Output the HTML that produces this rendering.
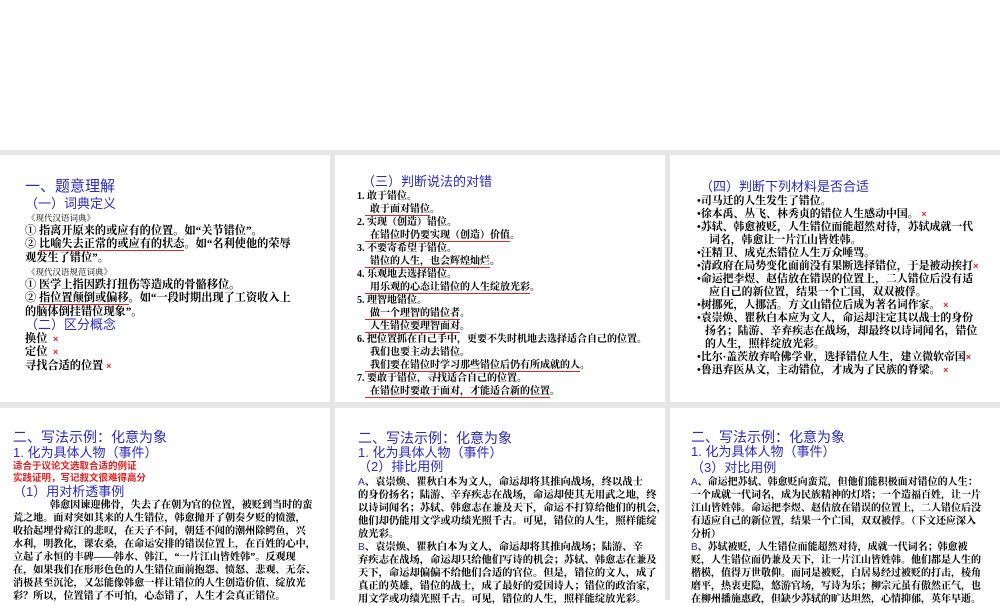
<!DOCTYPE html>
<html><head><meta charset="utf-8"><style>
*{margin:0;padding:0;box-sizing:border-box}
body{width:1000px;height:600px;overflow:hidden;background:#fff;position:relative;font-family:"Liberation Serif","Noto Serif CJK SC",serif}
.bg{position:absolute;left:0;top:150px;width:1000px;height:450px;background:#e6e6e6}
.s{position:absolute;background:#fff;overflow:hidden}
.l{position:absolute;white-space:nowrap;color:#000;font-weight:bold;line-height:13px}
.h{font-family:"Liberation Sans","Noto Sans CJK SC",sans-serif;color:#2a2ac0;font-weight:normal}
.r{color:#e02020;font-family:"Liberation Sans","Noto Sans CJK SC",sans-serif;font-weight:bold}
.u{border-bottom:1.5px solid #d42a2a}
.x{color:#e02020;font-family:"Liberation Sans",sans-serif;font-size:9px;font-weight:bold}
</style></head><body>
<div class="bg"></div>
<div class="s" style="left:0;top:155px;width:330px;height:247px"></div>
<div class="s" style="left:335px;top:155px;width:330px;height:247px"></div>
<div class="s" style="left:670px;top:155px;width:330px;height:247px"></div>
<div class="s" style="left:0;top:408px;width:330px;height:192px"></div>
<div class="s" style="left:335px;top:408px;width:330px;height:192px"></div>
<div class="s" style="left:670px;top:408px;width:330px;height:192px"></div>

<!-- Slide 1 -->
<div style="font-size:11.2px">
<div class="l h" style="left:25px;top:178px;font-size:15px;line-height:18px">一、题意理解</div>
<div class="l h" style="left:25px;top:196px;font-size:13px;line-height:16px">（一）词典定义</div>
<div class="l" style="left:27px;top:212px;font-size:8.5px;font-weight:normal">《现代汉语词典》</div>
<div class="l" style="left:25px;top:225px">① 指离开原来的或应有的位置。如“关节错位”。</div>
<div class="l" style="left:25px;top:238px">② <span class="u">比喻失去正常的或应有的状态</span>。如“名利使他的荣辱</div>
<div class="l" style="left:25px;top:252px">观发生了错位”。</div>
<div class="l" style="left:27px;top:266px;font-size:8.5px;font-weight:normal">《现代汉语规范词典》</div>
<div class="l" style="left:25px;top:279px">① 医学上指因跌打扭伤等造成的骨骼移位。</div>
<div class="l" style="left:25px;top:292px">② <span class="u">指位置颠倒或偏移</span>。如“一段时期出现了工资收入上</div>
<div class="l" style="left:25px;top:306px">的脑体倒挂错位现象”。</div>
<div class="l h" style="left:25px;top:317px;font-size:13px;line-height:16px">（二）区分概念</div>
<div class="l" style="left:25px;top:333px">换位 &nbsp;<span class="x">×</span></div>
<div class="l" style="left:25px;top:346px">定位 &nbsp;<span class="x">×</span></div>
<div class="l" style="left:25px;top:360px">寻找合适的位置 <span class="x">×</span></div>
</div>

<!-- Slide 2 -->
<div style="font-size:10px">
<div class="l h" style="left:362px;top:174px;font-size:13px;line-height:16px">（三）判断说法的对错</div>
<div class="l" style="left:357px;top:190px">1. 敢于错位。</div>
<div class="l" style="left:365px;top:203px"><span class="u">&nbsp; 敢于面对错位</span>。</div>
<div class="l" style="left:357px;top:216px">2. 实现（创造）错位。</div>
<div class="l" style="left:365px;top:229px"><span class="u">&nbsp; 在错位时仍要实现（创造）价值</span>。</div>
<div class="l" style="left:357px;top:242px">3. 不要寄希望于错位。</div>
<div class="l" style="left:365px;top:255px"><span class="u">&nbsp; 错位的人生，也会辉煌灿烂</span>。</div>
<div class="l" style="left:357px;top:268px">4. 乐观地去选择错位。</div>
<div class="l" style="left:365px;top:281px"><span class="u">&nbsp; 用乐观的心态让错位的人生绽放光彩</span>。</div>
<div class="l" style="left:357px;top:294px">5. 理智地错位。</div>
<div class="l" style="left:365px;top:307px"><span class="u">&nbsp; 做一个理智的错位者</span>。</div>
<div class="l" style="left:365px;top:320px"><span class="u">&nbsp; 人生错位要理智面对</span>。</div>
<div class="l" style="left:357px;top:333px">6. 把位置抓在自己手中，更要不失时机地去选择适合自己的位置。</div>
<div class="l" style="left:365px;top:346px">&nbsp; 我们也要主动去错位。</div>
<div class="l" style="left:365px;top:359px"><span class="u">&nbsp; 我们要在错位时学习那些错位后仍有所成就的人</span>。</div>
<div class="l" style="left:357px;top:372px">7. 要敢于错位，寻找适合自己的位置。</div>
<div class="l" style="left:365px;top:385px"><span class="u">&nbsp; 在错位时要敢于面对，才能适合新的位置</span>。</div>
</div>

<!-- Slide 3 -->
<div style="font-size:10.9px">
<div class="l h" style="left:700px;top:179px;font-size:13px;line-height:16px">（四）判断下列材料是否合适</div>
<div class="l" style="left:697px;top:195px">•司马迁的人生发生了错位。</div>
<div class="l" style="left:697px;top:208px">•徐本禹、丛飞、林秀贞的错位人生感动中国。 <span class="x">×</span></div>
<div class="l" style="left:697px;top:221px">•苏轼、韩愈被贬，人生错位而能超然对待，苏轼成就一代</div>
<div class="l" style="left:709px;top:234px">词名，韩愈让一片江山皆姓韩。</div>
<div class="l" style="left:697px;top:247px">•汪精卫、成克杰错位人生万众唾骂。</div>
<div class="l" style="left:697px;top:260px">•清政府在局势变化面前没有果断选择错位，于是被动挨打<span class="x">×</span></div>
<div class="l" style="left:697px;top:273px">•命运把李煜、赵佶放在错误的位置上，二人错位后没有适</div>
<div class="l" style="left:709px;top:286px">应自己的新位置，结果一个亡国，双双被俘。</div>
<div class="l" style="left:697px;top:299px">•树挪死，人挪活。方文山错位后成为著名词作家。 <span class="x">×</span></div>
<div class="l" style="left:697px;top:312px">•袁崇焕、瞿秋白本应为文人，命运却注定其以战士的身份</div>
<div class="l" style="left:705px;top:325px">扬名；陆游、辛弃疾志在战场，却最终以诗词闻名，错位</div>
<div class="l" style="left:705px;top:338px">的人生，照样绽放光彩。</div>
<div class="l" style="left:697px;top:351px">•比尔·盖茨放弃哈佛学业，选择错位人生，建立微软帝国<span class="x">×</span></div>
<div class="l" style="left:697px;top:364px">•鲁迅弃医从文，主动错位，才成为了民族的脊梁。 <span class="x">×</span></div>
</div>

<!-- Row 2 slide 1 -->
<div style="font-size:10.1px">
<div class="l h" style="left:13px;top:428px;font-size:14px;line-height:18px">二、写法示例：化意为象</div>
<div class="l h" style="left:13px;top:445px;font-size:13px;line-height:16px">1. 化为具体人物（事件）</div>
<div class="l r" style="left:13px;top:460px;font-size:9.5px">适合于议论文选取合适的例证</div>
<div class="l r" style="left:13px;top:472px;font-size:9.5px">实践证明，写记叙文很难得高分</div>
<div class="l h" style="left:13px;top:484px;font-size:13px;line-height:16px">（1）用对析透事例</div>
<div class="l" style="left:50px;top:499px">韩愈因谏迎佛骨，失去了在朝为官的位置，被贬到当时的蛮</div>
<div class="l" style="left:13px;top:512px">荒之地。面对突如其来的人生错位，韩愈抛开了朝奏夕贬的愤激，</div>
<div class="l" style="left:13px;top:525px">收拾起埋骨瘴江的悲叹，在天子不问，朝廷不闻的潮州除鳄鱼，兴</div>
<div class="l" style="left:13px;top:538px">水利，明教化，课农桑，在命运安排的错误位置上，在百姓的心中，</div>
<div class="l" style="left:13px;top:551px">立起了永恒的丰碑——韩水、韩江，“一片江山皆姓韩”。反观现</div>
<div class="l" style="left:13px;top:564px">在，如果我们在形形色色的人生错位面前抱怨、愤怒、悲观、无奈、</div>
<div class="l" style="left:13px;top:577px">消极甚至沉沦，又怎能像韩愈一样让错位的人生创造价值、绽放光</div>
<div class="l" style="left:13px;top:590px">彩？所以，位置错了不可怕，心态错了，人生才会真正错位。</div>
</div>

<!-- Row 2 slide 2 -->
<div style="font-size:10.3px">
<div class="l h" style="left:358px;top:429px;font-size:14px;line-height:18px">二、写法示例：化意为象</div>
<div class="l h" style="left:358px;top:445px;font-size:13px;line-height:16px">1. 化为具体人物（事件）</div>
<div class="l h" style="left:358px;top:459px;font-size:13px;line-height:16px">（2）排比用例</div>
<div class="l" style="left:358px;top:476px"><span class="h">A</span>、袁崇焕、瞿秋白本为文人，命运却将其推向战场，终以战士</div>
<div class="l" style="left:358px;top:489px">的身份扬名；陆游、辛弃疾志在战场，命运却使其无用武之地，终</div>
<div class="l" style="left:358px;top:502px">以诗词闻名；苏轼、韩愈志在兼及天下，命运不打算给他们的机会，</div>
<div class="l" style="left:358px;top:515px">他们却仍能用文学或功绩光照千古。可见，错位的人生，照样能绽</div>
<div class="l" style="left:358px;top:528px">放光彩。</div>
<div class="l" style="left:358px;top:541px"><span class="h">B</span>、袁崇焕、瞿秋白本为文人，命运却将其推向战场；陆游、辛</div>
<div class="l" style="left:358px;top:554px">弃疾志在战场，命运却只给他们写诗的机会；苏轼、韩愈志在兼及</div>
<div class="l" style="left:358px;top:567px">天下，命运却偏偏不给他们合适的官位。但是，错位的文人，成了</div>
<div class="l" style="left:358px;top:580px">真正的英雄，错位的战士，成了最好的爱国诗人；错位的政治家，</div>
<div class="l" style="left:358px;top:593px">用文学或功绩光照千古。可见，错位的人生，照样能绽放光彩。</div>
</div>

<!-- Row 2 slide 3 -->
<div style="font-size:10px">
<div class="l h" style="left:691px;top:428px;font-size:14px;line-height:18px">二、写法示例：化意为象</div>
<div class="l h" style="left:691px;top:444px;font-size:13px;line-height:16px">1. 化为具体人物（事件）</div>
<div class="l h" style="left:691px;top:460px;font-size:13px;line-height:16px">（3）对比用例</div>
<div class="l" style="left:691px;top:476px"><span class="h">A</span>、命运把苏轼、韩愈贬向蛮荒，但他们能积极面对错位的人生：</div>
<div class="l" style="left:691px;top:489px">一个成就一代词名，成为民族精神的灯塔；一个造福百姓，让一片</div>
<div class="l" style="left:691px;top:502px">江山皆姓韩。命运把李煜、赵佶放在错误的位置上，二人错位后没</div>
<div class="l" style="left:691px;top:515px">有适应自己的新位置，结果一个亡国，双双被俘。（下文还应深入</div>
<div class="l" style="left:691px;top:528px">分析）</div>
<div class="l" style="left:691px;top:541px"><span class="h">B</span>、苏轼被贬，人生错位而能超然对待，成就一代词名；韩愈被</div>
<div class="l" style="left:691px;top:554px">贬，人生错位而仍兼及天下，让一片江山皆姓韩。他们都是人生的</div>
<div class="l" style="left:691px;top:567px">楷模，值得万世敬仰。而同是被贬，白居易经过被贬的打击，棱角</div>
<div class="l" style="left:691px;top:580px">磨平，热衷吏隐，悠游官场，写诗为乐；柳宗元虽有傲然正气，也</div>
<div class="l" style="left:691px;top:593px">在柳州播施惠政，但缺少苏轼的旷达坦然，心情抑郁，英年早逝。</div>
</div>
</body></html>
